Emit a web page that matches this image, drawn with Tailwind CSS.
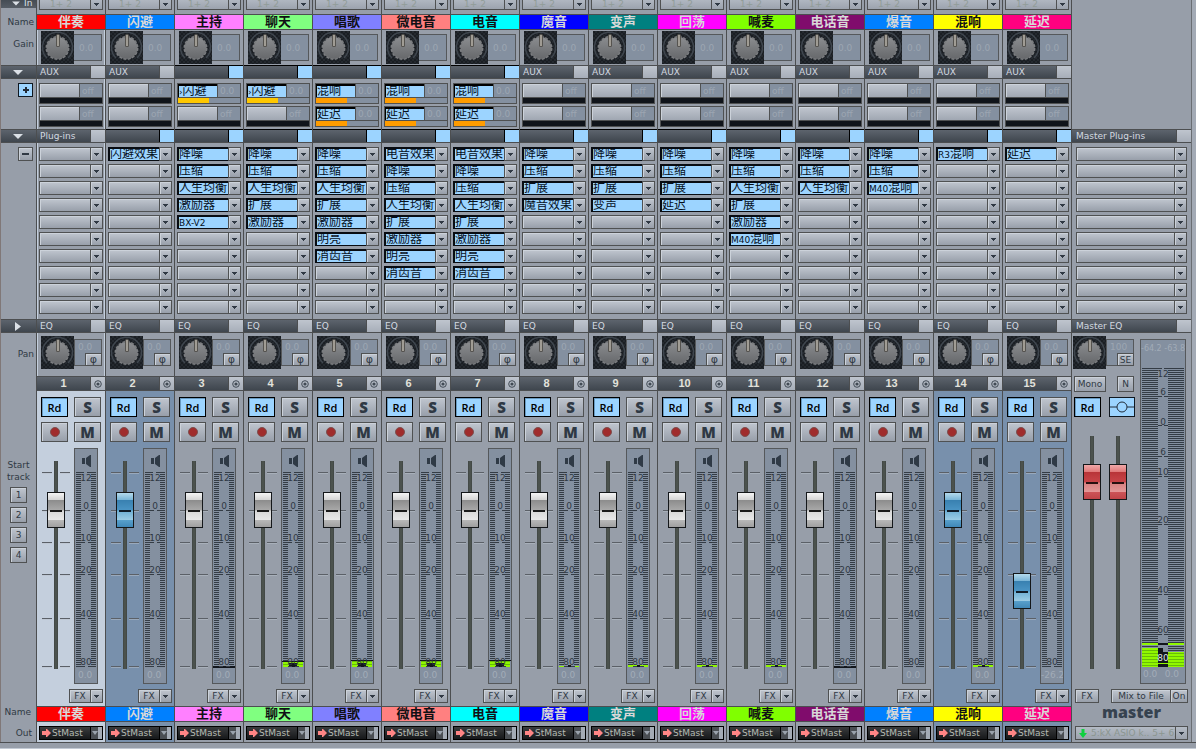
<!DOCTYPE html>
<html lang="zh-CN">
<head>
<meta charset="utf-8">
<title>Mixer</title>
<script src="https://cdn.jsdelivr.net/npm/@tailwindcss/browser@4"></script>
</head>
<body class="bg-[#979ea9] font-['DejaVu_Sans','Noto_Sans_CJK_SC',sans-serif] text-[9px] leading-[12px] text-[#2f3944]">
<svg class="absolute h-0 w-0" aria-hidden="true">
  <defs>
    <linearGradient id="kg" x1="0" y1="0" x2="0" y2="1"><stop offset="0" stop-color="#8b8d90"/><stop offset="1" stop-color="#66686b"/></linearGradient>
    <pattern id="ck" width="4" height="4" patternUnits="userSpaceOnUse"><rect width="4" height="4" fill="#24292f"/><rect width="2" height="2" fill="#1a1e23"/><rect x="2" y="2" width="2" height="2" fill="#1a1e23"/></pattern>
    <pattern id="st" width="4" height="2" patternUnits="userSpaceOnUse"><rect width="4" height="1" fill="#343c45"/></pattern>
    <pattern id="gr" width="4" height="3" patternUnits="userSpaceOnUse"><rect width="4" height="3" fill="#90f800"/><rect width="4" height="1" fill="#68bc08"/></pattern>
    <symbol id="knob" viewBox="0 0 33 33">
      <rect width="33" height="33" fill="url(#ck)"/>
      <path d="M6 27A15 15 0 1 1 27 27" fill="none" stroke="#3f464e" stroke-width="1.5"/>
      <circle cx="16.500" cy="17" r="11" fill="url(#kg)"/>
      <circle cx="16.500" cy="17" r="11.200" fill="none" stroke="#7c7e81" stroke-width="1.500" stroke-dasharray="3 1.400"/>
      <rect x="15" y="3" width="4" height="13" rx="1.500" fill="#55534f"/><rect x="16" y="4" width="2" height="11" fill="#a09c94"/>
    </symbol>
    <symbol id="down" viewBox="0 0 5 3"><path d="M0 0h5v1h-1v1h-1v1h-1v-1h-1v-1h-1z" fill="#303944"/></symbol>
    <symbol id="spk" viewBox="0 0 9 12"><path d="M0 3h3v6H0zM4 3l4-3h1v12H8L4 9z" fill="#2f3a46"/></symbol>
    <symbol id="right" viewBox="0 0 9 8"><path d="M0 2h4V0h1l4 4-4 4H4V6H0z" fill="#ff8585"/></symbol>
  </defs>
</svg>
<main id="app" class="flex h-[743px] border-b border-[#4c4e50]"></main>
<footer class="h-[6px] border-b border-[#c3cad4]"></footer>

<script>
const C = [
  ['伴奏', 'bg-[#ff0000] text-[#d8d8d8]', []],
  ['闪避', 'bg-[#0080ff] text-[#d8d8d8]', ['闪避效果']],
  ['主持', 'bg-[#ff80ff] text-[#101014]', ['降噪', '压缩', '人生均衡', '激励器', 'BX-V2']],
  ['聊天', 'bg-[#80ff80] text-[#101014]', ['降噪', '压缩', '人生均衡', '扩展', '激励器']],
  ['唱歌', 'bg-[#8080ff] text-[#101014]', ['降噪', '压缩', '人生均衡', '扩展', '激励器', '明亮', '消齿音']],
  ['微电音', 'bg-[#ff8080] text-[#101014]', ['电音效果', '降噪', '压缩', '人生均衡', '扩展', '激励器', '明亮', '消齿音']],
  ['电音', 'bg-[#00ffff] text-[#101014]', ['电音效果', '降噪', '压缩', '人生均衡', '扩展', '激励器', '明亮', '消齿音']],
  ['魔音', 'bg-[#0000ff] text-[#d8d8d8]', ['降噪', '压缩', '扩展', '魔音效果']],
  ['变声', 'bg-[#008080] text-[#d8d8d8]', ['降噪', '压缩', '扩展', '变声']],
  ['回荡', 'bg-[#ff00ff] text-[#d8d8d8]', ['降噪', '压缩', '扩展', '延迟']],
  ['喊麦', 'bg-[#80ff00] text-[#101014]', ['降噪', '压缩', '人生均衡', '扩展', '激励器', 'M40混响']],
  ['电话音', 'bg-[#800c6c] text-[#d8d8d8]', ['降噪', '压缩', '人生均衡']],
  ['爆音', 'bg-[#0080ff] text-[#d8d8d8]', ['降噪', '压缩', 'M40混响']],
  ['混响', 'bg-[#ffff00] text-[#101014]', ['R3混响']],
  ['延迟', 'bg-[#ff0080] text-[#d8d8d8]', ['延迟']],
];
// Meter level in pixels: -1 is an idle black line, 0 is silent.
const LEVEL = [0, 0, -1, 5, 6, 6, 6, 1, 2, 2, 2, -1, 0, 2, 0];
const BTN = 'border border-[#4f5152] bg-linear-to-b from-[#c0c6cf] to-[#989faa] shadow-[inset_1px_1px_0_#ccd2da]';
const DOWN = '<svg class="h-[3px] w-[5px]"><use href="#down"/></svg>';
const txt = s => s.replace(/[A-Z0-9-]+/g, '<span class="text-[9px]">$&</span>');

const head = (label, on, extra = '') => `
  <div class="flex h-[13px] border-b border-[#4c4e50] bg-linear-to-b from-[#5d646d] to-[#3f464e] ${on ? 'shadow-[0_-1px_0_#000]' : ''}">
    <span class="min-w-0 flex-1 whitespace-nowrap pl-[3px] text-[#d3d9e0]">${label}</span>
    <button aria-label="toggle" class="w-[15px] border-l ${on ? 'border-black bg-[#9cd4ff]' : 'border-[#4c4e50] bg-linear-to-b from-[#bfc5ce] to-[#a7aeb9]'}"></button>
  </div>`;

const slot = n => `
  <div class="flex h-[14px]">
    ${n ? `<button class="min-w-0 flex-1 overflow-hidden whitespace-nowrap border-t-2 border-l-2 border-b border-[#080c12] bg-[#9cd4ff] text-left text-[12px] leading-[11px] text-[#06101c]">${txt(n)}</button>`
        : `<button aria-label="empty slot" class="min-w-0 flex-1 ${BTN}"></button>`}
    <button aria-label="menu" class="-ml-px flex w-[13px] items-center justify-center ${BTN}">${DOWN}</button>
  </div>`;

const send = (n, color) => `
  <div class="border border-[#4f5152] bg-[#8490a0]">
    <div class="flex h-[13px]">
      ${n ? `<button class="w-[39px] overflow-hidden whitespace-nowrap border-t-2 border-l border-black bg-[#9cd4ff] text-left text-[12px] leading-[11px] text-[#06101c]">${n}</button>`
          : '<button aria-label="send" class="w-[39px] bg-linear-to-b from-[#c0c6cf] to-[#a0a7b2] shadow-[inset_1px_1px_0_#ccd2da]"></button>'}
      <span class="flex-1 border-l border-[#4f5152] pl-[2px] leading-[14px] text-[#9ca6b2]">${n ? '0.0' : 'off'}</span>
    </div>
    <div class="h-[6px] border-t border-[#4f5152] ${n ? '' : 'bg-[#10141a]'}"><div class="h-full w-1/2 ${color}"></div></div>
  </div>`;

const pan = (val, btn) => `
  <div class="flex h-[43px] items-start pt-[3px]">
    <svg role="img" aria-label="Pan" class="h-[33px] w-[33px] shrink-0"><use href="#knob"/></svg>
    <div class="mt-[3px] flex h-[27px] w-[28px] flex-col justify-between border border-[#55585b] bg-[#8490a0]">
      <span class="pl-[3px] pt-px text-[#9ca6b2]">${val}</span>
      <button class="-mr-px -mb-px h-[13px] w-[17px] self-end text-[11px] leading-[11px] ${BTN}">${btn}</button>
    </div>
  </div>`;

const RD = '<button class="h-[20px] w-[27px] border border-black bg-[#9cd4ff] font-[\'Open_Sans\',sans-serif] text-[11px] leading-[17px] font-semibold text-black shadow-[inset_1px_1px_0_#6899c0]">Rd</button>';

const FADER = 'm-0 w-[18px] appearance-none bg-[linear-gradient(90deg,#3f4543,#4f5651,#3f4543)] bg-[length:4px_100%] bg-center bg-no-repeat [direction:rtl] [writing-mode:vertical-lr] [&::-webkit-slider-thumb]:h-[36px] [&::-webkit-slider-thumb]:w-[18px] [&::-webkit-slider-thumb]:appearance-none [&::-webkit-slider-thumb]:border [&::-webkit-slider-thumb]:border-[#14171a]';
const CAP = {
  white: '[&::-webkit-slider-thumb]:bg-[linear-gradient(#1a1a1a,#1a1a1a),linear-gradient(#f4f4f4_0,#d4d4d4_7px,#8c8c8c_7px,#a8a8a8_17px,#d8d8d8_18px,#e8e8e8_27px,#b8b8b8_27px,#a0a0a0)] [&::-webkit-slider-thumb]:bg-[length:12px_2px,100%_100%] [&::-webkit-slider-thumb]:bg-[position:center_17px,0_0] [&::-webkit-slider-thumb]:bg-no-repeat',
  blue: '[&::-webkit-slider-thumb]:bg-[linear-gradient(#101c28,#101c28),linear-gradient(#b4daec_0,#78b4d6_7px,#3880b0_7px,#4a94c4_17px,#70b0d4_18px,#9ccce4_27px,#58a0cc_27px,#4088b8)] [&::-webkit-slider-thumb]:bg-[length:12px_2px,100%_100%] [&::-webkit-slider-thumb]:bg-[position:center_17px,0_0] [&::-webkit-slider-thumb]:bg-no-repeat',
  red: '[&::-webkit-slider-thumb]:bg-[linear-gradient(#281010,#281010),linear-gradient(#f0a8a8_0,#e07878_7px,#b83438_7px,#c84448_17px,#d88080_18px,#e49898_27px,#cc5458_27px,#c04448)] [&::-webkit-slider-thumb]:bg-[length:12px_2px,100%_100%] [&::-webkit-slider-thumb]:bg-[position:center_17px,0_0] [&::-webkit-slider-thumb]:bg-no-repeat',
};

const ticks = [[0, 12], [38, 0], [70, 10], [102, 20], [146, 40], [194, 80]];
function meter(lv) {
  let s = '<rect width="5" height="195" x="1" fill="url(#st)"/><rect x="16" width="5" height="195" fill="url(#st)"/><path d="M1 .5h8M12 .5h9" stroke="#343c45"/>';
  if (lv > 0) s += `<rect y="${194 - lv + 1}" x="1" width="20" height="${lv}" fill="${lv > 2 ? 'url(#gr)' : '#90f800'}"/><path d="M${lv > 4 ? '7 191h8v4h-8z' : '10 193h3v2h-3z'}" fill="#12161c"/>`;
  if (lv > 2) s += `<path d="M0 ${194 - lv}.5h22" stroke="#12161c"/>`;
  if (lv < 0) s += '<rect y="194" width="22" height="2" fill="#12161c"/>';
  ticks.forEach(([y, n], i) => {
    if (i) s += `<path d="M6 ${y}.5h4M13 ${y}.5h4" stroke="#343c45"/>`;
    s += `<text x="11" y="${i ? y - 1 : 9}" text-anchor="middle" fill="#2f3843" font-size="9">${n}</text>`;
  });
  return `<svg class="h-[196px] w-[22px]" viewBox="0 0 22 196">${s}</svg>`;
}
const side = `<svg class="h-[196px] w-[28px]" viewBox="0 0 28 196">${ticks.map(([y]) => `<path d="M0 ${y}.5h10M18 ${y}.5h10" stroke="#5b6067"/><path d="M0 ${y + 1}.5h10M18 ${y + 1}.5h10" stroke="#b9c1cb" stroke-opacity=".5"/>`).join('')}</svg>`;

function strip([name, color, plugs], i) {
  const aux = i >= 2 && i <= 6, blue = i === 1 || i > 12;
  const tint = i === 0 ? 'bg-[#c4cfdd]' : blue ? 'bg-[#7890ac]' : '';
  const edge = i ? '' : 'shadow-[inset_1px_0_0_#c4cfdd,inset_-1px_0_0_#c4cfdd]';
  const nm = `<div class="h-[15px] overflow-hidden border-b border-[#4c4e50] text-center text-[13px] leading-[14px] font-bold ${color}">${name}</div>`;
  const sends = aux ? (i < 4 ? send('<span class="text-[9px]">›</span>闪避', 'bg-[#ffc800]') + send('', '') : send('混响', 'bg-[#ff9c00]') + send('延迟', 'bg-[#ff9c00]')) : send('', '') + send('', '');
  return `
  <section aria-label="${name}" class="min-w-0 border-r border-[#4c4e50]">
    <div class="h-[15px] border-b border-[#4c4e50] px-[2px]">
      <label class="flex h-[10px] border border-t-0 border-[#4f5152] bg-linear-to-b from-[#b0b7c1] to-[#9ca3ae]">
        <select aria-label="In" class="min-w-0 flex-1 appearance-none pl-[10px] leading-[9px] text-[#919c98]"><option>1+ 2</option></select>
        <span class="flex w-[12px] items-center justify-center border-l border-[#4f5152]">${DOWN}</span>
      </label>
    </div>
    ${nm}
    <div class="flex h-[36px] items-start border-b border-[#4c4e50] pt-px pl-[4px] ${edge}">
      <svg role="img" aria-label="Gain" class="h-[33px] w-[33px] shrink-0"><use href="#knob"/></svg>
      <span class="mt-[3px] h-[27px] w-[28px] border border-l-0 border-[#55585b] bg-[#8490a0] pl-[5px] leading-[26px] text-[#9ca6b2]">0.0</span>
    </div>
    ${head(aux ? '' : 'AUX', aux)}
    <div class="flex h-[51px] flex-col gap-[2px] border-b border-[#4c4e50] px-[2px] pt-[4px] ${edge}">${sends}</div>
    ${head(i ? '' : 'Plug-ins', i > 0)}
    <div class="flex h-[177px] flex-col gap-[3px] border-b border-[#4c4e50] px-[2px] pt-[4px] ${edge}">${Array.from({length: 10}, (_, k) => slot(plugs[k])).join('')}</div>
    ${head('EQ', false)}
    <div class="border-b border-[#4c4e50] pl-[4px] ${edge}">${pan('0.0', 'φ')}</div>
    <div class="flex h-[14px] border-b border-[#4c4e50] bg-linear-to-b from-[#5d646d] to-[#3f464e]">
      <span class="flex-1 text-center font-['Liberation_Sans',sans-serif] text-[11px] leading-[13px] font-bold text-[#e2e2dc]">${i + 1}</span>
      <button aria-label="link" class="flex w-[15px] items-center justify-center border-l border-[#4c4e50] bg-linear-to-b from-[#bfc5ce] to-[#a7aeb9]"><svg class="h-[8px] w-[8px]" viewBox="0 0 8 8"><circle cx="4" cy="4" r="3.300" fill="none" stroke="#414a54"/><circle cx="4" cy="4" r="1.600" fill="#414a54"/></svg></button>
    </div>
    <div class="h-[316px] border-b border-[#4c4e50] pt-[6px] ${tint}">
      <div class="grid grid-cols-[27px_27px] gap-x-[6px] gap-y-[5px] pl-[4px]">
        ${RD}
        <button class="h-[20px] font-['Open_Sans',sans-serif] text-[15px] leading-[18px] font-extrabold ${BTN}">S</button>
        <button aria-label="Record" class="flex h-[20px] items-center justify-center ${BTN}"><span class="h-[10px] w-[10px] rounded-full border border-[#7c5050] bg-[#a02c2c]"></span></button>
        <button class="h-[20px] font-['Open_Sans',sans-serif] text-[15px] leading-[18px] font-extrabold ${BTN}">M</button>
      </div>
      <div class="mt-[6px] flex h-[236px] pl-[5px]">
        <div class="grid w-[28px] justify-items-center">
          <div class="col-start-1 row-start-1 pt-[24px]">${side}</div>
          <input type="range" aria-label="Volume" value="${i === 14 ? 35 : 82}" class="col-start-1 row-start-1 mt-[13px] h-[208px] ${FADER} ${blue ? CAP.blue : CAP.white}">
        </div>
        <div class="ml-[4px] flex w-[24px] flex-col border border-[#55585b] bg-[#8490a0]">
          <button aria-label="Mute speaker" class="flex h-[23px] items-center justify-center"><svg class="h-[12px] w-[9px]"><use href="#spk"/></svg></button>
          ${meter(LEVEL[i])}
          <span class="overflow-hidden whitespace-nowrap ${i === 14 ? 'pl-0' : 'pl-[3px]'} leading-[15px] text-[#a2acb8]">${i === 14 ? '-26.2' : '0.0'}</span>
        </div>
      </div>
      <div class="mt-[5px] flex justify-end pr-[2px]">
        <button class="h-[14px] w-[22px] leading-[11px] ${BTN}">FX</button>
        <button aria-label="FX menu" class="-ml-px flex w-[13px] items-center justify-center ${BTN}">${DOWN}</button>
      </div>
    </div>
    ${nm}
    <div class="h-[20px] px-[2px] pt-[4px] ${tint}">
      <label class="flex h-[14px] items-center border border-black bg-linear-to-b from-[#3a3c3e] to-[#16181a] pl-[2px]">
        <svg class="h-[8px] w-[9px] shrink-0"><use href="#right"/></svg>
        <select aria-label="Out" class="min-w-0 flex-1 appearance-none pl-px leading-[12px] text-[#b4bab2]"><option>StMast</option></select>
        <span class="flex h-full w-[12px] shrink-0 items-center border-r-4 border-l border-r-[#a4abb5] border-l-black bg-[#4a4e53] pl-px"><svg class="h-[4px] w-[6px]" viewBox="0 0 6 4"><path d="M0 0h6L3 4z" fill="#9aa2ac"/></svg></span>
      </label>
    </div>
  </section>`;
}

const bar = d => `<div class="flex h-[13px] justify-center border-b border-[#4c4e50] bg-linear-to-b from-[#5d646d] to-[#3f464e] pr-[2px]"><svg class="mt-[2px] h-[9px] w-[10px]" viewBox="0 0 10 9"><path d="${d}" fill="#dbe0e6"/></svg></div>`;
const TRI = 'M0 2h10L5 7z';
const rail = `
  <aside class="w-[37px] shrink-0 border-r border-l border-l-[#807878] border-r-[#4c4e50]">
    <div class="flex h-[15px] bg-linear-to-b from-[#454c54] to-[#565d66] bg-[length:100%_8px] bg-no-repeat pl-[10px] leading-[7px] text-[#dbe0e6]"><svg class="h-[7px] w-[10px]" viewBox="0 0 10 9"><path d="${TRI}" fill="#dbe0e6"/></svg><span class="pl-[3px]">In</span></div>
    <div class="h-[15px] pr-[2px] text-right leading-[15px]">Name</div>
    <div class="h-[36px] border-b border-[#4c4e50] pr-[2px] text-right leading-[29px]">Gain</div>
    ${bar(TRI)}
    <div class="flex h-[51px] items-start justify-end border-b border-[#4c4e50] pt-[4px] pr-[3px]"><button aria-label="Add AUX" class="flex h-[14px] w-[15px] items-center justify-center border border-[#101820] bg-[#9cd4ff]"><svg class="h-[6px] w-[6px]" viewBox="0 0 6 6"><path d="M2 0h2v2h2v2H4v2H2V4H0V2h2z" fill="#222c38"/></svg></button></div>
    ${bar(TRI)}
    <div class="flex h-[177px] items-start justify-end border-b border-[#4c4e50] pt-[4px] pr-[3px]"><button aria-label="Fewer slots" class="flex h-[14px] w-[15px] items-center justify-center ${BTN}"><span class="h-[2px] w-[7px] bg-[#303944]"></span></button></div>
    ${bar('M2 0v9l6-4.500z')}
    <div class="h-[126px] pr-[2px] text-right leading-[43px]">Pan</div>
    <div class="text-center">Start<br>track</div>
    <div class="mt-[4px] flex flex-col items-center gap-[4px]">${[1, 2, 3, 4].map(n => `<button class="h-[16px] w-[17px] leading-[14px] ${BTN}">${n}</button>`).join('')}</div>
    <div class="mt-[143px] pr-[5px] text-right">Name</div>
    <div class="mt-[9px] pr-[4px] text-right">Out</div>
  </aside>`;

function masterMeter() {
  let s = '<rect x="1" width="16" height="300" fill="url(#st)"/><rect x="27" width="16" height="300" fill="url(#st)"/>';
  s += '<rect x="1" y="275" width="42" height="2" fill="#90f800"/><rect x="1" y="280" width="16" height="19" fill="url(#gr)"/><rect x="27" y="284" width="16" height="15" fill="url(#gr)"/><path d="M17 275h10v2H17zM17 280h5v4h5v15H17z" fill="#12161c"/><path d="M17 295.500h10" stroke="#90f800"/>';
  [[0, 12, 9], [28, 6, 27], [57, 0, 57], [88, 6, 87], [108, 10, 107], [156, 20, 155], [226, 40, 225], [266, 60, 265], [294, 80, 293]].forEach(([y, n, t]) => {
    if (n !== 80) s += `<path d="M17 ${y}.5h4M23 ${y}.5h4" stroke="#343c45"/>`;
    s += `<text x="22" y="${t}" text-anchor="middle" font-size="9" fill="${n === 80 ? '#dfe4e8' : '#2f3843'}">${n}</text>`;
  });
  return `<svg class="h-[299px] w-[44px]" viewBox="0 0 44 299">${s}</svg>`;
}

const master = `
  <section aria-label="master" class="w-[120px] shrink-0 border-r border-[#6a6e73]">
    <div class="h-[130px] border-b border-[#4c4e50]"></div>
    ${head('<span class="pl-px">Master Plug-ins</span>', false)}
    <div class="flex h-[177px] flex-col gap-[3px] border-b border-[#4c4e50] pt-[4px] pr-[4px] pl-[4px]">${Array.from({length: 10}, () => slot('')).join('')}</div>
    ${head('<span class="pl-px">Master EQ</span>', false)}
    <div class="flex h-[351px] pl-px">
      <div class="w-[67px]">
        ${pan('100', '<span class="text-[9px]">SE</span>')}
        <div class="flex h-[16px] gap-[11px] pl-px">
          <button class="w-[32px] ${BTN}">Mono</button><button class="w-[17px] ${BTN}">N</button>
        </div>
        <div class="mt-[5px] flex gap-[8px] pl-px">${RD}
          <button aria-label="Bypass" class="flex h-[20px] w-[26px] items-center border border-[#101820] bg-[#9cd4ff]"><svg class="h-[12px] w-[24px]" viewBox="0 0 24 12"><path d="M0 6h7M17 6h7" stroke="#222c38"/><circle cx="12" cy="6" r="5" fill="none" stroke="#222c38"/></svg></button>
        </div>
        <div class="mt-[19px] flex gap-[8px] pl-[10px]">
          <input type="range" aria-label="Master left" value="86" class="h-[233px] ${FADER} ${CAP.red}">
          <input type="range" aria-label="Master right" value="86" class="h-[233px] ${FADER} ${CAP.red}">
        </div>
      </div>
      <div class="mt-[6px] flex h-[345px] w-[46px] flex-col border border-[#55585b] bg-[#8490a0] text-[#a2acb8]">
        <div class="flex h-[28px] justify-between overflow-hidden pt-[3px] text-[8px]"><span>-64.2</span><span>-63.8</span></div>
        ${masterMeter()}
        <div class="flex justify-between px-[2px] pr-[6px] leading-[15px]"><span>0.0</span><span>0.0</span></div>
      </div>
    </div>
    <div class="mt-[5px] flex h-[14px] justify-between pr-[3px] pl-[3px] leading-[12px]">
      <button class="w-[24px] ${BTN}">FX</button>
      <div class="flex"><button class="w-[60px] ${BTN}">Mix to File</button><button class="-ml-px w-[18px] ${BTN}">On</button></div>
    </div>
    <h1 class="h-[23px] text-center font-['Open_Sans',sans-serif] text-[16px] leading-[18px] font-extrabold text-[#36424f]">master</h1>
    <label class="mr-[3px] ml-[3px] flex h-[14px] items-center border border-[#4f5152] bg-linear-to-b from-[#b4bbc5] to-[#9ca3ae] pl-[3px]">
      <svg class="h-[9px] w-[8px] shrink-0" viewBox="0 0 8 9"><path d="M2.500 0h3v4H8L4 9 0 4h2.500z" fill="#10d040"/></svg>
      <select aria-label="Master out" class="min-w-0 flex-1 appearance-none pl-[4px] text-[#8b9690]"><option>5:kX ASIO k.. 5+ 6)</option></select>
      <span class="flex h-full w-[12px] items-center justify-center border-l border-[#4f5152]">${DOWN}</span>
    </label>
  </section>
  <div class="w-[4px] shrink-0 bg-[#a3aab5]"></div>`;

document.getElementById('app').innerHTML = rail + `<div class="grid min-w-0 flex-1 grid-cols-15">${C.map(strip).join('')}</div>` + master;
</script>
</body>
</html>
